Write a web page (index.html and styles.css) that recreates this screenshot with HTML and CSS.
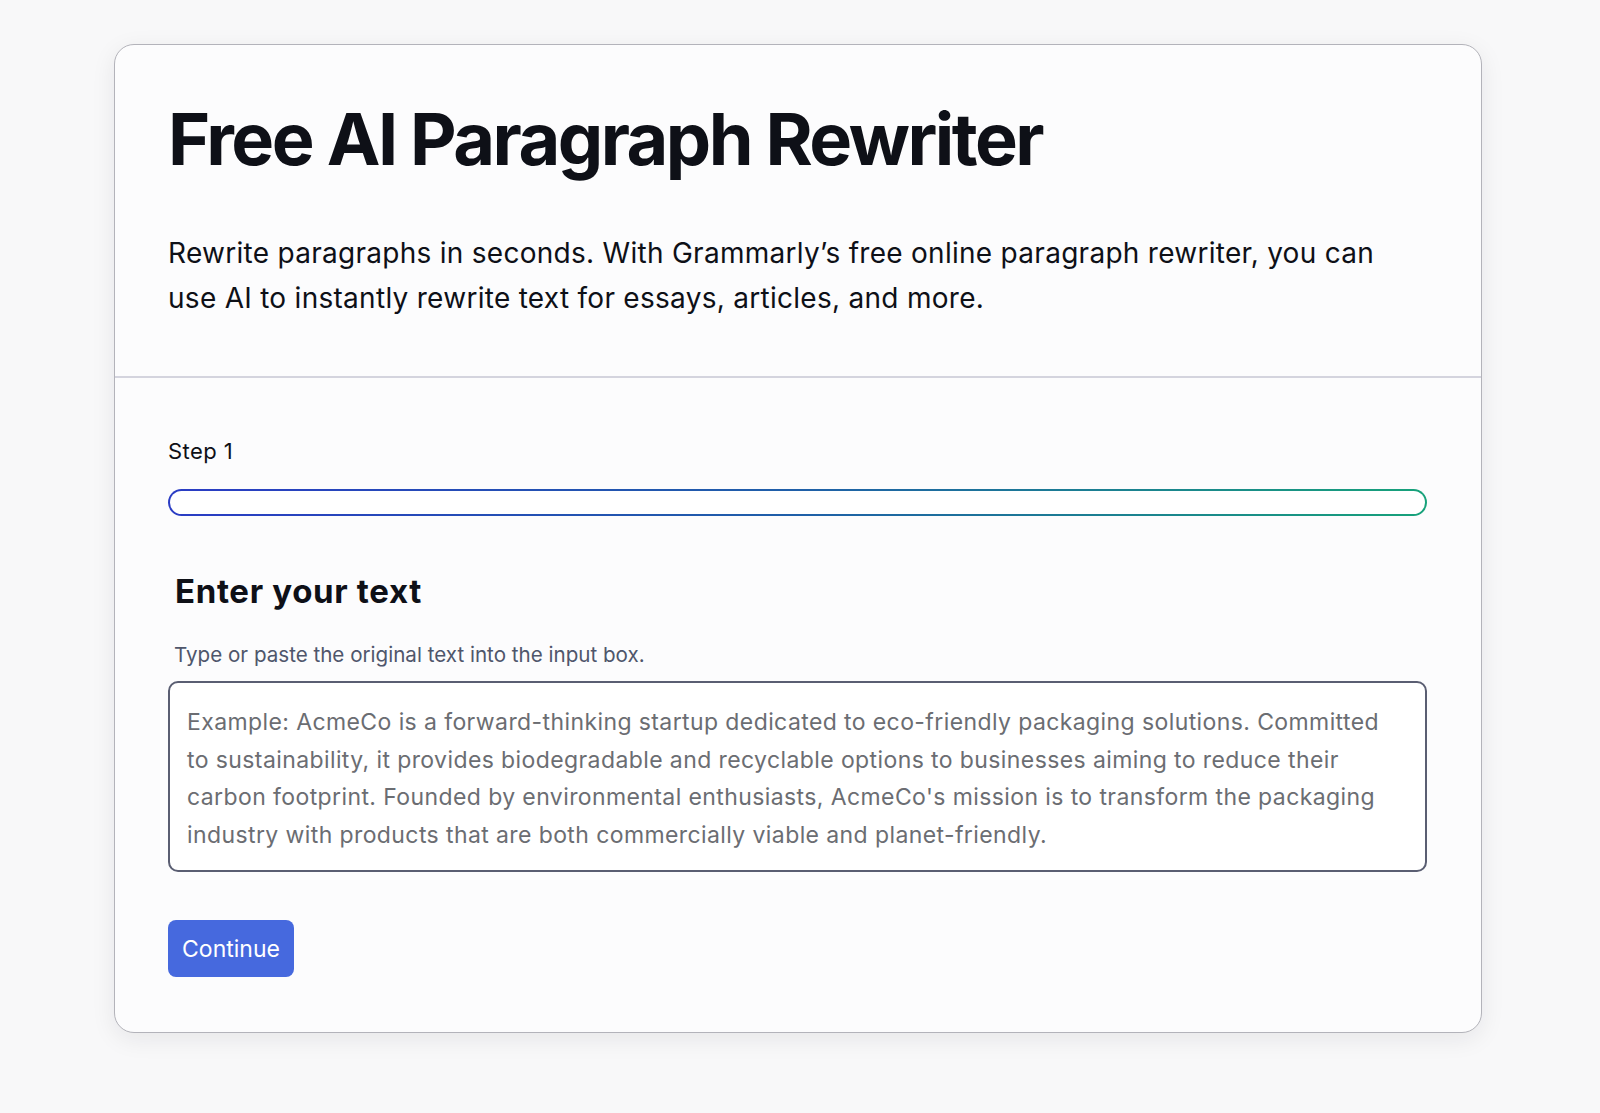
FILE: index.html
```html
<!DOCTYPE html>
<html lang="en">
<head>
<meta charset="utf-8">
<title>Free AI Paragraph Rewriter</title>
<link rel="stylesheet" href="styles.css">
</head>
<body>
<main class="card">
  <header class="card-head">
    <h1 class="title">Free AI Paragraph Rewriter</h1>
    <p class="lead">Rewrite paragraphs in seconds. With Grammarly’s free online paragraph rewriter, you can use AI to instantly rewrite text for essays, articles, and more.</p>
  </header>
  <section class="card-body">
    <div class="step">Step 1</div>
    <div class="progress"></div>
    <h2 class="subhead">Enter your text</h2>
    <p class="hint">Type or paste the original text into the input box.</p>
    <div class="input">Example: AcmeCo is a forward-thinking startup dedicated to eco-friendly packaging solutions. Committed to sustainability, it provides biodegradable and recyclable options to businesses aiming to reduce their carbon footprint. Founded by environmental enthusiasts, AcmeCo's mission is to transform the packaging industry with products that are both commercially viable and planet-friendly.</div>
    <button class="btn" type="button">Continue</button>
  </section>
</main>
</body>
</html>
```

FILE: styles.css
```css
* { box-sizing: border-box; }
html, body { margin: 0; padding: 0; }
body {
  background: #f8f8f9;
  font-family: Inter, "Noto Sans", sans-serif;
  color: #0e1017;
  padding: 44px 118px 80px 114px;
}
.card {
  width: 1368px;
  height: 989px;
  background: #fcfcfd;
  border: 1px solid #b3b3ba;
  border-radius: 20px;
  box-shadow: 0 6px 24px rgba(20, 20, 40, 0.08);
  display: flex;
  flex-direction: column;
}
.card-head {
  padding: 51px 54px 55px 53px;
  border-bottom: 2px solid #d4d4de;
}
.title {
  margin: 0;
  font-size: 72px;
  line-height: 86px;
  font-weight: 700;
  letter-spacing: -0.035em;
  color: #0e1017;
}
.lead {
  margin: 49px 0 0;
  max-width: 1225px;
  font-size: 28px;
  line-height: 45px;
  letter-spacing: 0.01em;
  color: #0e1017;
}
.card-body {
  padding: 58px 54px 0 53px;
  display: flex;
  flex-direction: column;
  align-items: flex-start;
}
.step {
  font-size: 22px;
  line-height: 30px;
  letter-spacing: 0.02em;
  color: #0e1017;
}
.progress {
  align-self: stretch;
  margin-top: 23px;
  height: 27px;
  border-radius: 14px;
  border: 2px solid transparent;
  background:
    linear-gradient(#ffffff, #ffffff) padding-box,
    linear-gradient(90deg, #2a3cc4 0%, #1f5fa8 50%, #17a27a 100%) border-box;
}
.subhead {
  margin: 55px 0 0 7px;
  font-size: 33px;
  line-height: 40px;
  font-weight: 700;
  letter-spacing: 0.02em;
  color: #0e1017;
}
.hint {
  margin: 30px 0 0 6px;
  font-size: 20.6px;
  line-height: 28px;
  color: #4f566b;
}
.input {
  align-self: stretch;
  margin-top: 12px;
  height: 191px;
  border: 2px solid #5a5e72;
  border-radius: 10px;
  background: #ffffff;
  padding: 21px 30px 14px 17px;
  font-size: 23px;
  line-height: 37.5px;
  letter-spacing: 0.4px;
  color: #6b6d72;
}
.btn {
  margin-top: 48px;
  width: 126px;
  height: 57px;
  border: 0;
  border-radius: 8px;
  background: #4669de;
  color: #ffffff;
  font-family: Inter, "Noto Sans", sans-serif;
  font-size: 23px;
  padding: 0;
  cursor: pointer;
}
```
